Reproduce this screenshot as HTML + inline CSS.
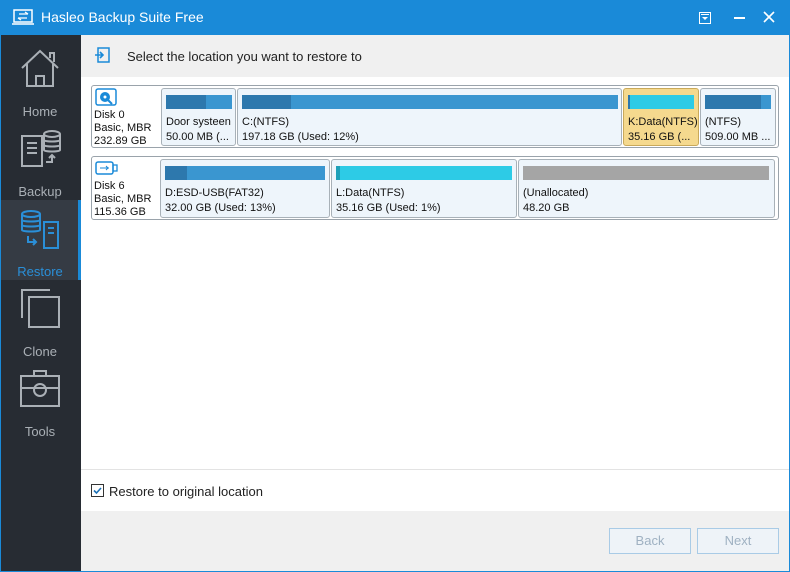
<!DOCTYPE html><html><head><style>
*{margin:0;padding:0;box-sizing:border-box}
body{width:790px;height:572px;overflow:hidden;font-family:"Liberation Sans",sans-serif;background:#fff;position:relative}
.a{position:absolute}
.title{left:0;top:0;width:790px;height:35px;background:#1a8ad8;color:#fff;font-size:14px}
.side{left:0;top:35px;width:81px;height:537px;background:#272c33}
.nav{left:0;width:80px;height:80px;color:#aab0b6;font-size:13px;text-align:center}
.nav span{position:absolute;left:0;right:0;top:64px}
.disk{border:1px solid #9aa3ab;border-radius:3px;background:#fff}
.p{border:1px solid #a8b1b8;border-radius:3px;background:#eef5fb;font-size:11px;color:#111;line-height:15px}
.p .t{position:absolute;left:4px;top:26px;white-space:nowrap;overflow:hidden}
.bar{position:absolute;left:4px;top:6px;height:14px;background:#3a96d0}
.btn{top:528px;width:82px;height:26px;border:1px solid #a9cbe6;background:#eef3f8;color:#9fb1c2;font-size:13px;text-align:center;line-height:24px}
</style></head><body>
<div class="a" style="left:0;top:0;width:790px;height:572px;border:1px solid #1a8ad8;z-index:5;pointer-events:none"></div>
<div class="a title">
<svg class="a" style="left:12px;top:9px" width="22" height="17"><rect x="2" y="1" width="18" height="12" fill="none" stroke="#fff" stroke-width="1.5"/><line x1="0" y1="15" x2="22" y2="15" stroke="#fff" stroke-width="1.5"/><path d="M7 5h9M13 3l3 2M6 9h9M6 9l3 2" stroke="#fff" stroke-width="1.3"/></svg>
<div class="a" style="left:41px;top:9px">Hasleo Backup Suite Free</div>
<svg class="a" style="left:699px;top:12px" width="12" height="12"><rect x="0.5" y="0.5" width="11" height="11" fill="none" stroke="#fff"/><path d="M3 5l3 3 3-3" fill="#fff"/><line x1="2" y1="2.5" x2="10" y2="2.5" stroke="#fff"/></svg>
<div class="a" style="left:734px;top:17px;width:11px;height:1.5px;background:#fff"></div>
<svg class="a" style="left:763px;top:11px" width="12" height="12"><path d="M1 1l10 10M11 1L1 11" stroke="#fff" stroke-width="1.6"/></svg>
</div>
<div class="a side">
<div class="a nav" style="top:5px"><svg class="a" style="left:20px;top:8px" width="40" height="40" fill="none" stroke="#aab0b6" stroke-width="2"><path d="M2 20L20 3l18 17M7 16v22h26V16M16 38V28h8v10M30 10V5h4v9"/></svg><span>Home</span></div>
<div class="a nav" style="top:85px"><svg class="a" style="left:20px;top:8px" width="42" height="42" fill="none" stroke="#aab0b6" stroke-width="2"><rect x="2" y="8" width="20" height="30"/><path d="M7 15h10M7 20h10M7 25h10"/><ellipse cx="32" cy="6" rx="8" ry="3"/><path d="M24 6v16c0 2 16 2 16 0V6M24 12c0 2 16 2 16 0M24 17c0 2 16 2 16 0M26 34h6v-7M29 30l3-3 3 3"/></svg><span>Backup</span></div>
<div class="a nav" style="top:165px;background:#353b44;color:#2a8fd8"><div class="a" style="right:-1px;top:0;width:3px;height:80px;background:#1a8ad8"></div><svg class="a" style="left:20px;top:8px" width="42" height="42" fill="none" stroke="#2a8fd8" stroke-width="2"><ellipse cx="11" cy="6" rx="9" ry="3"/><path d="M2 6v16c0 2 18 2 18 0V6M2 12c0 2 18 2 18 0M2 17c0 2 18 2 18 0M24 14h14v26H24zM28 20h6M28 25h6M8 28v6h8M13 31l3 3-3 3"/></svg><span>Restore</span></div>
<div class="a nav" style="top:245px"><svg class="a" style="left:20px;top:8px" width="42" height="42" fill="none" stroke="#aab0b6" stroke-width="2"><path d="M2 30V2h28"/><rect x="9" y="9" width="30" height="30"/></svg><span>Clone</span></div>
<div class="a nav" style="top:325px"><svg class="a" style="left:19px;top:8px" width="42" height="42" fill="none" stroke="#aab0b6" stroke-width="2"><rect x="2" y="8" width="38" height="30"/><path d="M15 8V3h12v5M2 20h38"/><circle cx="21" cy="22" r="6"/></svg><span>Tools</span></div>
</div>
<div class="a" style="left:81px;top:35px;width:708px;height:42px;background:#f0f0f0"></div>
<svg class="a" style="left:94px;top:47px" width="16" height="16"><rect x="4" y="1" width="11" height="14" fill="none" stroke="#1a8ad8" stroke-width="1.5"/><path d="M1 8h8M6 5l3 3-3 3" stroke="#1a8ad8" stroke-width="1.6" fill="none"/></svg>
<div class="a" style="left:127px;top:49px;font-size:13px;color:#222">Select the location you want to restore to</div>

<div class="a disk" style="left:91px;top:85px;width:688px;height:63px"></div>
<svg class="a" style="left:95px;top:88px" width="22" height="18"><rect x="1" y="1" width="20" height="16" rx="2" fill="none" stroke="#1a8ad8" stroke-width="1.5"/><circle cx="10" cy="9" r="5" fill="#1a8ad8"/><circle cx="10" cy="9" r="1.5" fill="#fff"/><path d="M13 12l4 4" stroke="#1a8ad8" stroke-width="2"/></svg>
<div class="a" style="left:94px;top:109px;font-size:11px;line-height:13px;color:#111">Disk 0<br>Basic, MBR<br>232.89 GB</div>
<div class="a p" style="left:161px;top:88px;width:75px;height:58px"><div class="bar" style="width:66px"></div><div class="bar" style="width:40px;background:#2d78ad"></div><div class="t">Door systeen<br>50.00 MB (...</div></div>
<div class="a p" style="left:237px;top:88px;width:385px;height:58px"><div class="bar" style="width:376px"></div><div class="bar" style="width:49px;background:#2d78ad"></div><div class="t">C:(NTFS)<br>197.18 GB (Used: 12%)</div></div>
<div class="a p" style="left:623px;top:88px;width:76px;height:58px;background:#f5d98e;border-color:#c9a95a"><div class="bar" style="width:66px;background:#2dcbe6"></div><div class="bar" style="width:2px;background:#2d78ad"></div><div class="t">K:Data(NTFS)<br>35.16 GB (...</div></div>
<div class="a p" style="left:700px;top:88px;width:76px;height:58px"><div class="bar" style="width:66px"></div><div class="bar" style="width:56px;background:#2d78ad"></div><div class="t">(NTFS)<br>509.00 MB ...</div></div>

<div class="a disk" style="left:91px;top:156px;width:688px;height:64px"></div>
<svg class="a" style="left:95px;top:160px" width="24" height="16"><rect x="1" y="2" width="17" height="12" rx="2" fill="none" stroke="#1a8ad8" stroke-width="1.5"/><rect x="18" y="5" width="4" height="6" fill="none" stroke="#1a8ad8" stroke-width="1.3"/><path d="M5 8h9M11 6l2 2-2 2" stroke="#1a8ad8" fill="none"/></svg>
<div class="a" style="left:94px;top:180px;font-size:11px;line-height:13px;color:#111">Disk 6<br>Basic, MBR<br>115.36 GB</div>
<div class="a p" style="left:160px;top:159px;width:170px;height:59px"><div class="bar" style="width:160px"></div><div class="bar" style="width:22px;background:#2d78ad"></div><div class="t">D:ESD-USB(FAT32)<br>32.00 GB (Used: 13%)</div></div>
<div class="a p" style="left:331px;top:159px;width:186px;height:59px"><div class="bar" style="width:176px;background:#2dcbe6"></div><div class="bar" style="width:4px;background:#1ea0b8"></div><div class="t">L:Data(NTFS)<br>35.16 GB (Used: 1%)</div></div>
<div class="a p" style="left:518px;top:159px;width:257px;height:59px"><div class="bar" style="width:246px;background:#a5a5a5"></div><div class="t">(Unallocated)<br>48.20 GB</div></div>

<div class="a" style="left:81px;top:469px;width:708px;height:1px;background:#e3e3e3"></div>
<div class="a" style="left:91px;top:484px;width:13px;height:13px;border:1px solid #333;background:#fff"></div>
<svg class="a" style="left:92px;top:485px" width="11" height="11"><path d="M2 5.5l2.5 2.5L9 3" stroke="#1a6fb5" stroke-width="1.6" fill="none"/></svg>
<div class="a" style="left:109px;top:484px;font-size:13px;color:#222">Restore to original location</div>
<div class="a" style="left:81px;top:511px;width:708px;height:60px;background:#f0f0f0"></div>
<div class="a btn" style="left:609px">Back</div>
<div class="a btn" style="left:697px">Next</div>
</body></html>
